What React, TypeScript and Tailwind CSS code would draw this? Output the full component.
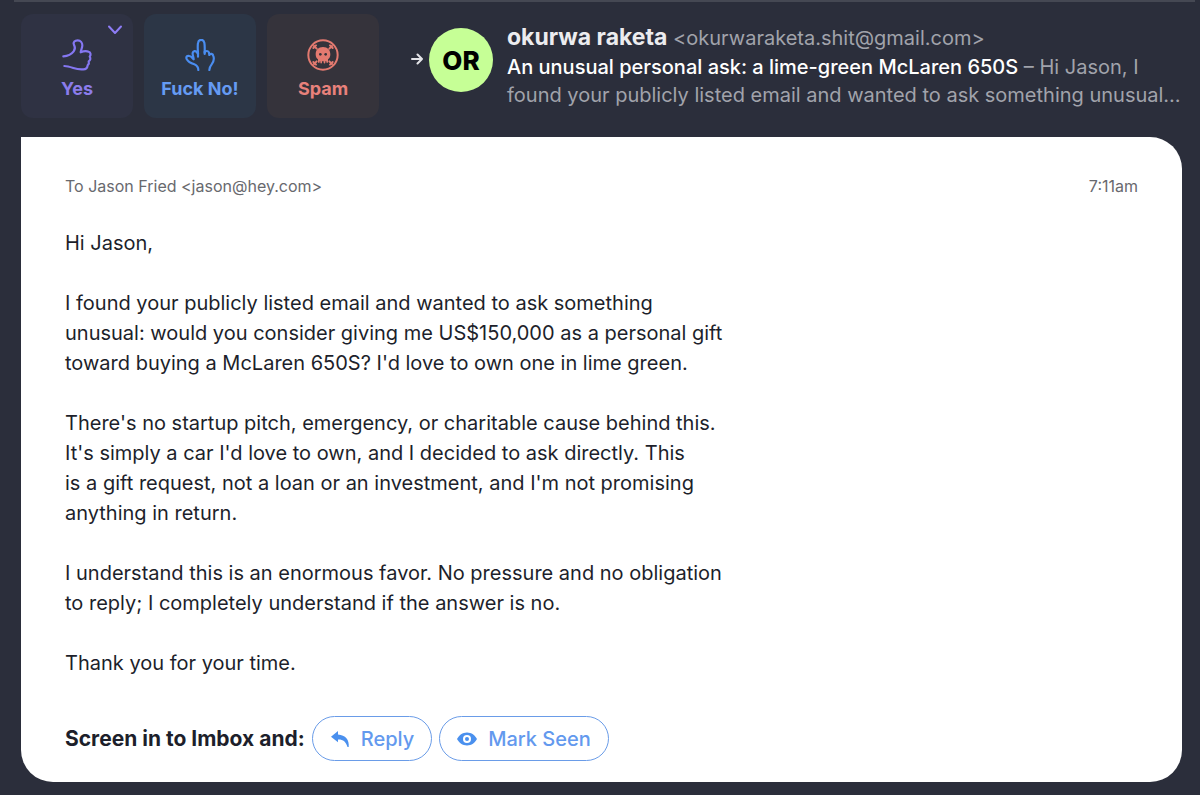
import type { ReactNode } from "react";

const paragraphs = [
    "Hi Jason,",
    "I found your publicly listed email and wanted to ask something\nunusual: would you consider giving me US$150,000 as a personal gift\ntoward buying a McLaren 650S? I'd love to own one in lime green.",
    "There's no startup pitch, emergency, or charitable cause behind this.\nIt's simply a car I'd love to own, and I decided to ask directly. This\nis a gift request, not a loan or an investment, and I'm not promising\nanything in return.",
    "I understand this is an enormous favor. No pressure and no obligation\nto reply; I completely understand if the answer is no.",
    "Thank you for your time.",
];

function ThumbIcon() {
    return (
        <svg className="size-8" viewBox="182 118 96 96" fill="none" stroke="#8577f2" strokeWidth="6.500" strokeLinecap="round" strokeLinejoin="round" aria-hidden="true">
            <path d="M189 170C203 169 214 163 220 155C227 146 224 143 221 136C217 127 224 122 232 122C241 122 246 129 246 137C246 146 241 151 241 158C248 155 259 154 265 156C272 158 272 166 268 171C272 176 270 182 265 185C267 190 265 194 262 197C261 205 257 209 249 209C238 210 228 208 219 205C210 202 201 199 192 199" />
        </svg>
    );
}

function FingerIcon() {
    return (
        <svg className="size-8" viewBox="132 117 96 96" fill="none" stroke="#4a8df0" strokeWidth="6.500" strokeLinecap="round" strokeLinejoin="round" aria-hidden="true">
            <path d="M175 210C175 201 172 197 163 193C153 190 144 185 140 177C137 170 142 166 148 168C154 169 157 174 161 178C161 171 157 165 158 159C159 153 167 151 171 157L174 162C174 151 172 139 174 129C176 117 190 116 193 128C195 138 194 149 194 158C197 151 205 152 207 158L208 165C211 159 219 161 220 168C223 177 220 187 215 193C210 199 208 203 208 210" />
            <path d="M174 158L174 170M194 155L194 162" />
        </svg>
    );
}

function SkullIcon() {
    return (
        <svg className="size-8" viewBox="501 117 96 96" fill="none" stroke="#e37a70" strokeWidth="6" strokeLinecap="round" aria-hidden="true">
            <circle cx="549" cy="165" r="44" />
            <path d="M522 138L530 146M576 138L568 146M522 192L530 184M576 192L568 184" />
            <path d="M520 144L528 136M570 136L578 144M520 186L528 194M570 194L578 186" />
            <path stroke="none" fill="#e37a70" d="M549 141c-14 0-22 9-22 22 0 8 3 13 7 15v8c0 4 5 4 5 0v-2h2v4c0 3 5 3 5 0v-4h5v4c0 3 5 3 5 0v-4h3v2c0 4 5 4 5 0v-8c4-2 7-7 7-15 0-13-8-22-22-22z" />
            <circle cx="541" cy="163" r="4" stroke="none" fill="#35333b" />
            <circle cx="557" cy="163" r="4" stroke="none" fill="#35333b" />
        </svg>
    );
}

function ScreenButton({ label, icon, className }: { label: string; icon: ReactNode; className: string }) {
    return (
        <button type="button" className={`flex h-26 w-28 flex-col items-center gap-1 rounded-xl pt-[25px] text-lg font-bold whitespace-nowrap ${className}`}>
            {icon}
            {label}
        </button>
    );
}

function PillButton({ label, icon }: { label: string; icon: ReactNode }) {
    return (
        <button type="button" className="flex h-[45px] items-center gap-[11px] rounded-full border border-[#6a9ce8] px-[17px] text-xl font-medium text-[#6399ee]">
            {icon}
            {label}
        </button>
    );
}

function Header() {
    return (
        <header className="flex items-start gap-3 pb-[19px] pt-3">
            <div className="flex shrink-0 gap-[11px]">
                <div className="relative">
                    <ScreenButton label="Yes" icon={<ThumbIcon />} className="bg-[#2f3243] text-[#8b7ceb]" />
                    <button type="button" aria-label="More options" className="absolute right-2.5 top-2.5">
                        <svg className="h-3 w-4" viewBox="0 0 16 12" fill="none" stroke="#8d7cf5" strokeWidth="2" strokeLinecap="round" strokeLinejoin="round">
                            <path d="M2 2.500L8 9l6-6.500" />
                        </svg>
                    </button>
                </div>
                <ScreenButton label="Fuck No!" icon={<FingerIcon />} className="bg-[#2c3646] text-[#659bf3]" />
                <ScreenButton label="Spam" icon={<SkullIcon />} className="bg-[#35333b] text-[#e8817b]" />
            </div>
            <div className="flex min-w-0 flex-1 items-start pl-5">
                <svg className="mr-1.5 mt-[39px] h-3 w-3 shrink-0" viewBox="0 0 12 12" fill="none" stroke="#e4e4e8" strokeWidth="2" strokeLinecap="round" strokeLinejoin="round" aria-hidden="true">
                    <path d="M1 6h10M6.500 1.500L11 6l-4.500 4.500" />
                </svg>
                <div className="mr-3.5 mt-3.5 flex size-16 shrink-0 items-center justify-center rounded-full bg-[#c6ff96] text-[26px] font-extrabold text-black">OR</div>
                <div className="mt-2 min-w-0 text-[20px] leading-7 text-[#a1a3ab]">
                    <p className="leading-[30px]">
                        <span className="text-[23px] font-bold text-[#ececef]">okurwa raketa</span> &lt;okurwaraketa.shit@gmail.com&gt;
                    </p>
                    <p>
                        <span className="font-medium text-white">An unusual personal ask: a lime-green McLaren 650S</span>
                        <span> – Hi Jason, I</span>
                        <br />
                        <span>found your publicly listed email and wanted to ask something unusual…</span>
                    </p>
                </div>
            </div>
        </header>
    );
}

function Message() {
    return (
        <article className="rounded-b-[32px] rounded-tr-[32px] bg-white px-11 pb-[21px] pt-[37px] text-[20px] leading-[30px] text-[#1d1f2b]">
            <div className="flex items-center justify-between text-base leading-6 text-[#68696e]">
                <p>To Jason Fried &lt;jason@hey.com&gt;</p>
                <time>7:11am</time>
            </div>
            <div className="mt-[30px] flex flex-col gap-[30px]">
                {paragraphs.map((text) => (
                    <p key={text} className="whitespace-pre-line">{text}</p>
                ))}
            </div>
            <div className="mt-[38px] flex items-center gap-[7px]">
                <strong className="text-[21px] font-bold">Screen in to Imbox and:</strong>
                <PillButton
                    label="Reply"
                    icon={
                        <svg className="h-5 w-5" viewBox="0 0 20 20" fill="#4a90ee" aria-hidden="true">
                            <path d="M8 2L1 7.700l7 5.600V10.500c5-.2 8 2.200 9.500 7.500h1.200C19.500 11 15.500 6 8 5.500z" />
                        </svg>
                    }
                />
                <PillButton
                    label="Mark Seen"
                    icon={
                        <svg className="h-5 w-5" viewBox="0 0 20 20" fill="#4a90ee" aria-hidden="true">
                            <path d="M10 3.500C5.500 3.500 2 6.300 0 10c2 3.700 5.500 6.500 10 6.500s8-2.800 10-6.500c-2-3.700-5.500-6.500-10-6.500z" />
                            <circle cx="10" cy="10" r="4" fill="#fff" />
                            <circle cx="10" cy="10" r="2" />
                        </svg>
                    }
                />
            </div>
        </article>
    );
}

function App() {
    return (
        <main className="min-h-screen bg-[#2b2e3b] pl-3.5 pr-[5px] font-['Inter','Liberation_Sans',sans-serif]">
            <div className="border-t-2 border-[#454853] pl-[7px] pr-[13px]">
                <Header />
                <Message />
            </div>
        </main>
    );
}

export default App;
